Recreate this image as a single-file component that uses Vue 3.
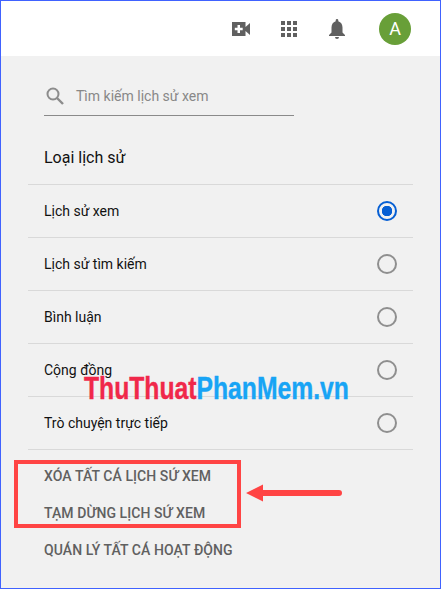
<script setup>
const rows = [
  { label: "Lịch sử xem", checked: true },
  { label: "Lịch sử tìm kiếm", checked: false },
  { label: "Bình luận", checked: false },
  { label: "Cộng đồng", checked: false },
  { label: "Trò chuyện trực tiếp", checked: false },
];

const actions = [
  "XÓA TẤT CÁ LỊCH SỨ XEM",
  "TẠM DỪNG LỊCH SỨ XEM",
  "QUÁN LÝ TẤT CÁ HOẠT ĐỘNG",
];
</script>

<template>
  <div class="page">
    <header class="topbar">
      <svg class="icon video" viewBox="0 0 18 14" width="18" height="14">
        <path fill="#606060" fill-rule="evenodd" d="M0 0h13.500v5L18 1v12l-4.500-4v5H0zM5.500 3v2.800H2.800v2.400h2.700V11h2.500V8.200h2.700V5.800H8V3z" />
      </svg>
      <svg class="icon grid" viewBox="0 0 16 16" width="16" height="16">
        <path fill="#606060" d="M0 0h4v4H0zM6 0h4v4H6zM12 0h4v4h-4zM0 6h4v4H0zM6 6h4v4H6zM12 6h4v4h-4zM0 12h4v4H0zM6 12h4v4H6zM12 12h4v4h-4z" />
      </svg>
      <svg class="icon bell" viewBox="0 0 16 20" width="16" height="20">
        <path fill="#606060" d="M8 0a1.300 1.300 0 0 0-1.300 1.300v.9C3.900 3 2.500 5.500 2.500 8.500v5L0 16v1h16v-1l-2.500-2.500v-5c0-3-1.400-5.500-4.200-6.300v-.9A1.300 1.300 0 0 0 8 0zM6 18a2 2 0 0 0 4 0z" />
      </svg>
      <div class="avatar">A</div>
    </header>

    <main class="panel">
      <div class="search">
        <svg viewBox="0 0 18 18" width="18" height="18">
          <circle cx="7" cy="7" r="5.500" fill="none" stroke="#8c8c8c" stroke-width="2" />
          <path d="M11 11l6 6" stroke="#8c8c8c" stroke-width="2.400" />
        </svg>
        <span>Tìm kiếm lịch sử xem</span>
      </div>

      <h2 class="title">Loại lịch sử</h2>

      <ul class="rows">
        <li v-for="row in rows" :key="row.label" class="row">
          <span>{{ row.label }}</span>
          <span class="radio" :class="{ checked: row.checked }"></span>
        </li>
      </ul>

      <div class="actions">
        <a v-for="action in actions" :key="action">{{ action }}</a>
      </div>
    </main>

    <div class="watermark"><span class="red">ThuThuat</span><span class="blue">PhanMem.vn</span></div>
    <div class="callout"></div>
    <svg class="arrow" viewBox="0 0 98 20" width="98" height="20">
      <path fill="#ff4444" d="M0 10L17 1.500V7h76a3 3 0 0 1 0 6H17v5.500z" />
    </svg>
  </div>
</template>

<style scoped>
.page {
  position: relative;
  box-sizing: border-box;
  width: 441px;
  height: 589px;
  border: 1px solid #4062ff;
  background: #f1f1f1;
  font-family: Roboto, "Noto Sans", sans-serif;
  overflow: hidden;
}

.topbar {
  display: flex;
  align-items: center;
  height: 55px;
  background: #fff;
  padding-left: 231px;
}

.video {
  margin-right: 31px;
}

.grid {
  margin-right: 32px;
}

.bell {
  margin-right: 34px;
}

.avatar {
  width: 32px;
  height: 32px;
  border-radius: 50%;
  background: #689f38;
  color: #fff;
  font-size: 18px;
  line-height: 32px;
  text-align: center;
}

.panel {
  padding: 0 27px;
}

.search {
  display: flex;
  align-items: center;
  gap: 12px;
  box-sizing: border-box;
  width: 250px;
  height: 37px;
  margin: 23px 0 0 16px;
  padding: 0 0 3px 1px;
  border-bottom: 1px solid #8a8a8a;
  font-size: 14px;
  color: #888;
}

.search svg {
  margin-left: 1px;
}

.title {
  margin: 30px 0 0 16px;
  font-size: 16px;
  font-weight: 400;
  line-height: 24px;
  color: #111;
}

.rows {
  list-style: none;
  margin: 14px 0 0;
  padding: 0;
  border-top: 1px solid #d9d9d9;
}

.row {
  display: flex;
  align-items: center;
  justify-content: space-between;
  box-sizing: border-box;
  height: 53px;
  padding: 0 16px;
  border-bottom: 1px solid #d9d9d9;
  font-size: 14px;
  color: #111;
}

.radio {
  box-sizing: border-box;
  width: 20px;
  height: 20px;
  border: 2px solid #8f8f8f;
  border-radius: 50%;
}

.radio.checked {
  border-color: #065fd4;
  background: radial-gradient(circle, #065fd4 0 5px, transparent 5.500px);
}

.actions {
  display: flex;
  flex-direction: column;
  padding: 8px 0 0 16px;
}

.actions a {
  height: 37px;
  line-height: 37px;
  font-size: 14px;
  font-weight: 500;
  letter-spacing: 0.08px;
  color: #606060;
}

.watermark {
  position: absolute;
  left: 83px;
  top: 369px;
  font-family: "Liberation Sans", sans-serif;
  font-size: 32px;
  font-weight: 700;
  line-height: 36px;
  white-space: nowrap;
  -webkit-text-stroke: 0.4px;
  transform: scaleX(0.772);
  transform-origin: left center;
}

.red {
  color: #f0284a;
}

.blue {
  color: #18a4f5;
}

.callout {
  position: absolute;
  left: 13px;
  top: 459px;
  box-sizing: border-box;
  width: 227px;
  height: 68px;
  border: 4px solid #ff4444;
}

.arrow {
  position: absolute;
  left: 245px;
  top: 482px;
}
</style>
